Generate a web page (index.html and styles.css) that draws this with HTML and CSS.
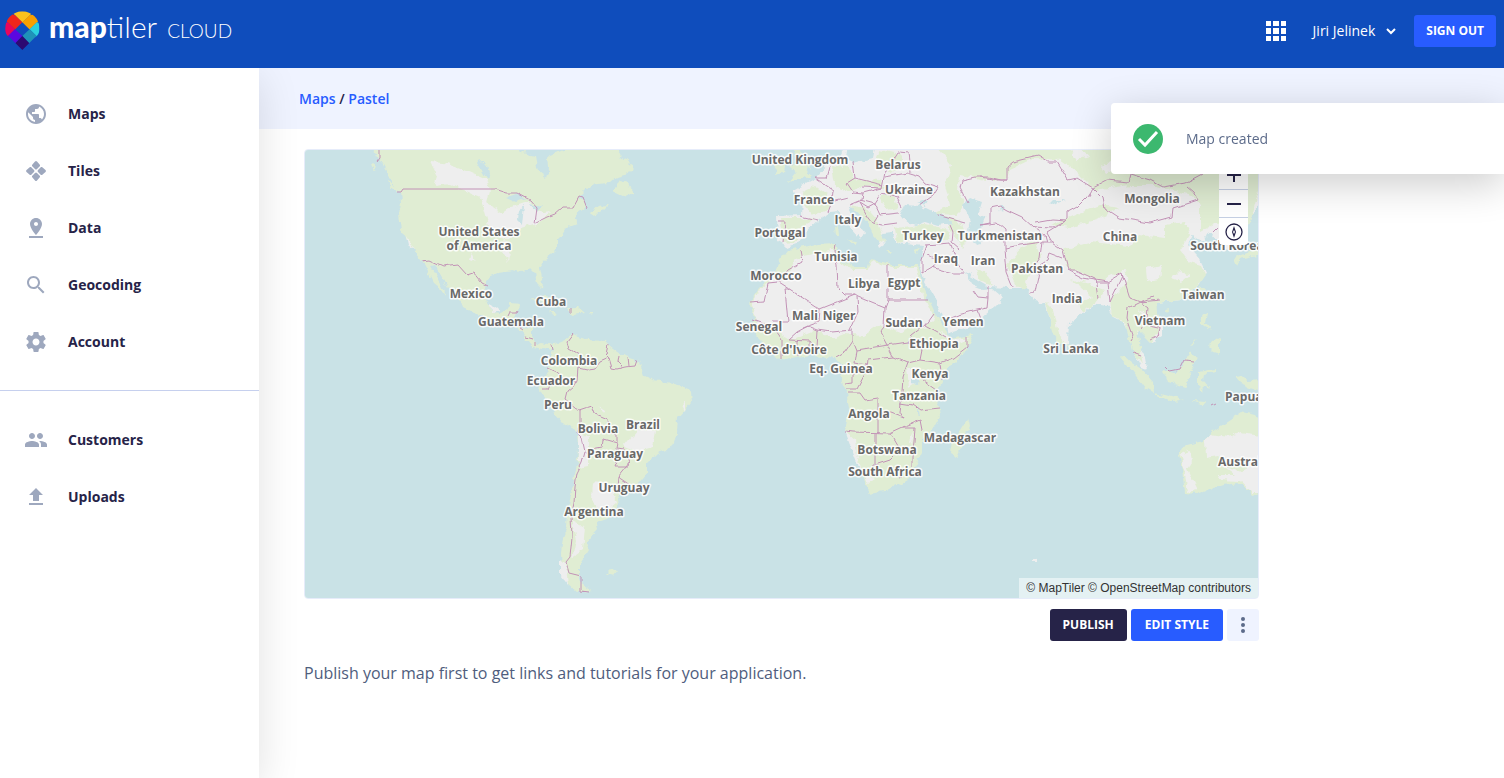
FILE: index.html
```html
<!DOCTYPE html>
<html lang="en">
<head>
<meta charset="utf-8">
<meta name="viewport" content="width=device-width, initial-scale=1">
<title>Pastel – MapTiler Cloud</title>
<link rel="stylesheet" href="styles.css">
</head>
<body>
<header class="topbar">
  <a class="brand" href="#" aria-label="MapTiler Cloud">
    <svg class="brand-mark" viewBox="15 32 105 118" aria-hidden="true">
      <clipPath id="pin"><path d="M15 85A52 52 0 0 1 119 85C119 100 113 107 104 113L67 150 30 113C21 107 15 100 15 85z"/></clipPath>
      <g clip-path="url(#pin)">
        <path fill="#fbc21d" d="M67 20 98 36 90 45 67 67 45 45 36 36z"/>
        <path fill="#f9a000" d="M89 45 112 40 119 60 111 67 89 88 67 66z"/>
        <path fill="#f1261c" d="M45 45 67 66 45 88 23 67 15 60 22 36z"/>
        <path fill="#e8065c" d="M23 66 45 87 23 109 5 100 5 70z"/>
        <path fill="#2bd0de" d="M111 66 130 70 130 100 111 109 89 87z"/>
        <path fill="#5b07e0" d="M45 87 67 108 45 130 22 109z"/>
        <path fill="#1f93b8" d="M89 87 112 109 89 130 67 108z"/>
        <path fill="#2c0a72" d="M67 108 89 130 67 152 45 130z"/>
      </g>
    </svg>
    <span class="brand-name"><b>map</b>tiler</span>
    <span class="brand-suffix">CLOUD</span>
  </a>
  <div class="topbar-actions">
    <button class="icon-button" type="button" aria-label="Apps">
      <svg width="20" height="20" viewBox="0 0 20 20" fill="#fff"><path d="M0 0h5v5H0zM7 0h6v5H7zM15 0h5v5h-5zM0 7h5v6H0zM7 7h6v6H7zM15 7h5v6h-5zM0 15h5v5H0zM7 15h6v5H7zM15 15h5v5h-5z"/></svg>
    </button>
    <button class="user-button" type="button">Jiri Jelinek
      <svg width="10" height="7" viewBox="0 0 10 7" fill="none" stroke="#fff" stroke-width="2"><path d="M1 1l4 4 4-4"/></svg>
    </button>
    <button class="btn btn-primary" type="button">SIGN OUT</button>
  </div>
</header>

<div class="shell">
  <nav class="sidebar" aria-label="Main">
    <ul class="nav-list">
      <li><a class="nav-link" href="#"><svg viewBox="0 0 24 24"><path d="M12 2C6.480 2 2 6.480 2 12s4.480 10 10 10 10-4.480 10-10S17.520 2 12 2zm-1 17.930c-3.950-.49-7-3.850-7-7.930 0-.62.08-1.210.21-1.790L9 15v1c0 1.100.9 2 2 2v1.930zm6.900-2.540c-.26-.81-1-1.390-1.900-1.390h-1v-3c0-.55-.45-1-1-1H8v-2h2c.55 0 1-.45 1-1V7h2c1.100 0 2-.9 2-2v-.41c2.930 1.190 5 4.060 5 7.410 0 2.080-.8 3.970-2.100 5.390z"/></svg>Maps</a></li>
      <li><a class="nav-link" href="#"><svg viewBox="0 0 24 24"><path d="M11 2.500q1-1 2 0L16 6v1l-3 3q-1 1-2 0L8 7V6zM11 14q1-1 2 0l3 3v1l-3 3.500q-1 1-2 0L8 18v-1zM6 8h1l3 3q1 1 0 2l-3 3H6l-3.500-3q-1-1 0-2zM17 8h1l3.500 3q1 1 0 2L18 16h-1l-3-3q-1-1 0-2z"/></svg>Tiles</a></li>
      <li><a class="nav-link" href="#"><svg viewBox="0 0 24 24"><path d="M18 8c0-3.310-2.690-6-6-6S6 4.690 6 8c0 4.500 6 11 6 11s6-6.500 6-11zm-8 0c0-1.100.9-2 2-2s2 .9 2 2-.89 2-2 2c-1.100 0-2-.9-2-2zM5 20v2h14v-2H5z"/></svg>Data</a></li>
      <li><a class="nav-link" href="#"><svg viewBox="0 0 24 24"><path d="M15.500 14h-.79l-.28-.27C15.410 12.590 16 11.110 16 9.500 16 5.910 13.090 3 9.500 3S3 5.910 3 9.500 5.910 16 9.500 16c1.610 0 3.090-.59 4.230-1.570l.27.28v.79l5 4.990L20.490 19l-4.990-5zm-6 0C7.010 14 5 11.990 5 9.500S7.010 5 9.500 5 14 7.010 14 9.500 11.990 14 9.500 14z"/></svg>Geocoding</a></li>
      <li><a class="nav-link" href="#"><svg viewBox="0 0 24 24"><path d="M19.430 12.980c.04-.32.07-.64.07-.98s-.03-.66-.07-.98l2.110-1.650c.19-.15.24-.42.12-.64l-2-3.460c-.12-.22-.39-.3-.61-.22l-2.490 1c-.52-.4-1.080-.73-1.690-.98l-.38-2.650C14.460 2.180 14.250 2 14 2h-4c-.25 0-.46.18-.49.42l-.38 2.650c-.61.25-1.170.59-1.690.98l-2.490-1c-.23-.09-.49 0-.61.22l-2 3.460c-.13.22-.07.49.12.64l2.110 1.650c-.04.32-.07.65-.07.98s.03.66.07.98l-2.110 1.650c-.19.15-.24.42-.12.64l2 3.460c.12.22.39.3.61.22l2.490-1c.52.4 1.080.73 1.690.98l.38 2.650c.03.24.24.42.49.42h4c.25 0 .46-.18.49-.42l.38-2.650c.61-.25 1.170-.59 1.690-.98l2.490 1c.23.09.49 0 .61-.22l2-3.460c.12-.22.07-.49-.12-.64l-2.110-1.650zM12 15.500c-1.930 0-3.500-1.570-3.500-3.500s1.570-3.500 3.500-3.500 3.500 1.570 3.500 3.500-1.570 3.500-3.500 3.500z"/></svg>Account</a></li>
    </ul>
    <ul class="nav-list nav-list-secondary">
      <li><a class="nav-link" href="#"><svg viewBox="0 0 24 24"><path d="M16 11c1.660 0 2.990-1.340 2.990-3S17.660 5 16 5s-3 1.340-3 3 1.340 3 3 3zm-8 0c1.660 0 2.990-1.340 2.990-3S9.660 5 8 5 5 6.340 5 8s1.340 3 3 3zm0 2c-2.330 0-7 1.170-7 3.500V19h14v-2.500c0-2.330-4.670-3.500-7-3.500zm8 0c-.29 0-.62.02-.97.05 1.160.84 1.970 1.970 1.970 3.450V19h6v-2.500c0-2.330-4.670-3.500-7-3.500z"/></svg>Customers</a></li>
      <li><a class="nav-link" href="#"><svg viewBox="0 0 24 24"><path d="M9 16h6v-6h4l-7-7-7 7h4zm-4 2h14v2H5z"/></svg>Uploads</a></li>
    </ul>
  </nav>

  <main class="main">
    <div class="crumbs"><a href="#">Maps</a> / <a href="#">Pastel</a></div>
    <div class="content">
      <div class="map">
        <svg class="map-canvas" viewBox="305 150 953 448" preserveAspectRatio="xMidYMid slice" role="img" aria-label="World map, Pastel style">
          <defs>
            <filter id="coast" filterUnits="userSpaceOnUse" x="290" y="135" width="985" height="480" color-interpolation-filters="sRGB">
              <feTurbulence type="fractalNoise" baseFrequency=".13" numOctaves="3" seed="4" result="n"/>
              <feDisplacementMap in="SourceGraphic" in2="n" scale="7" xChannelSelector="R" yChannelSelector="G"/>
            </filter>
            <filter id="wander" filterUnits="userSpaceOnUse" x="290" y="135" width="985" height="480" color-interpolation-filters="sRGB">
              <feTurbulence type="fractalNoise" baseFrequency=".08" numOctaves="2" seed="8" result="n"/>
              <feDisplacementMap in="SourceGraphic" in2="n" scale="5" xChannelSelector="R" yChannelSelector="G"/>
            </filter>
          </defs>
          <rect class="water" x="305" y="150" width="953" height="448"/>
          <g filter="url(#coast)">
            <!-- Americas -->
            <path class="green" d="M370 138 374 150 379 159 386 171 392 182 400 192 401 202 399 215 401 230 408 242 415 252 422 260 428 272 433 282 440 288 447 297 441 283 435 273 430 266 434 265 440 273 448 287 460 300 463 308 473 313 490 318 507 323 522 332 527 340 533 347 543 349 550 351 553 345 543 343 537 345 532 337 532 328 520 327 514 318 520 303 512 302 507 310 500 314 493 313 487 303 485 287 488 277 500 272 513 270 520 272 530 268 535 273 537 283 542 288 543 282 540 267 545 260 557 250 557 240 562 235 567 227 577 223 575 216 586 208 584 200 578 197 587 188 597 184 610 183 617 177 632 173 633 165 622 157 610 138z"/>
            <path class="green" d="M590 212 598 206 608 205 600 213 592 215zM612 192 620 180 628 182 634 194 625 198zM387 181 400 189 397 192 388 185zM371 163 375 164 374 170z"/>
            <path class="green" d="M553 345 550 367 543 380 540 390 547 400 555 415 562 423 577 432 578 450 576 470 572 490 568 510 567 527 563 537 561 553 562 570 567 583 577 592 593 591 583 585 580 577 580 563 588 550 586 543 597 530 595 522 610 517 618 507 617 497 625 494 633 490 647 473 647 463 657 453 672 448 677 433 678 418 692 402 691 392 673 383 653 380 643 375 637 360 623 356 610 347 607 341 587 340 572 335 565 340 558 343z"/>
            <path class="green" d="M530 300 541 296 553 299 567 305 555 307 541 302zM568 308 577 307 584 313 572 315zM550 312 556 312 555 316zM588 311 593 311 592 315zM606 574 610 570 617 571 613 576z"/>
            <path class="bare" d="M430 162 443 163 466 171 487 180 490 190 487 203 503 213 512 207 525 203 530 201 538 213 551 211 540 222 521 228 505 240 490 233 485 215 480 197 450 184 434 186 437 176zM506 240 511 250 508 262 503 254zM472 253 476 262 470 260zM406 236 414 250 408 245zM485 290 489 303 500 311 492 313z"/>
            <path class="bare" d="M578 430 588 437 588 466 578 468 578 450zM637 430 655 431 652 448 640 452 624 446zM593 483 610 486 616 503 604 513 592 500zM571 520 585 527 583 550 572 558 576 540zM560 560 566 566 568 585 560 575zM599 406 605 410 603 413zM682 405 686 402 685 411z"/>
            <path class="water" d="M516 140 520 152 535 156 538 172 546 178 549 168 548 157 563 150 566 140zM477 162 484 161 490 178 488 181zM506 198 517 194 527 198 515 202zM519 210 524 206 522 224 518 220zM530 204 542 207 537 213z"/>
            <!-- Africa -->
            <path class="green" d="M788 250 780 260 775 272 760 288 750 303 754 318 750 327 755 335 767 347 780 360 797 357 813 355 823 356 835 359 843 365 841 377 847 392 850 407 845 430 852 443 857 460 862 475 867 487 870 494 890 490 907 480 915 467 922 453 922 440 933 430 940 417 938 400 937 390 947 370 967 350 973 335 950 339 947 332 937 318 925 292 919 273 917 265 893 265 883 262 870 260 868 267 853 267 840 260 838 252 835 243 817 244 800 248z"/>
            <path class="bare" d="M797 256 815 249 833 250 840 262 853 269 868 269 872 262 892 267 915 267 922 292 934 318 925 327 915 322 901 333 880 325 862 336 845 334 835 338 815 330 790 341 770 327 756 322 752 303 762 288 775 277 790 272zM937 330 955 340 970 338 955 345zM845 432 855 440 862 473 874 480 868 484 857 463zM910 440 914 430 912 445zM907 367 917 367 915 383 909 387z"/>
            <path class="green" d="M968 417 970 427 957 457 950 453 952 440 960 430z"/>
            <!-- Eurasia -->
            <path class="bare" d="M877 138 873 158 853 163 840 158 830 163 817 177 802 185 793 190 803 200 802 215 777 216 778 242 787 247 800 242 810 227 818 220 830 213 840 212 850 228 860 239 865 232 853 217 848 207 857 208 872 227 880 248 884 245 882 233 893 232 897 243 913 245 924 246 921 260 919 270 922 276 933 295 947 327 950 333 973 325 997 305 1003 298 992 288 983 289 973 285 965 272 973 277 990 287 1008 288 1025 288 1035 300 1045 305 1050 322 1055 335 1060 343 1068 342 1069 323 1083 313 1098 303 1108 305 1113 317 1123 322 1130 335 1133 350 1143 370 1147 369 1145 358 1138 348 1135 335 1140 330 1150 343 1163 335 1163 323 1153 308 1157 303 1180 300 1197 288 1205 272 1197 255 1188 245 1193 235 1203 242 1210 232 1220 246 1232 252 1235 235 1247 222 1262 200 1275 138z"/>
            <path class="bare" d="M838 140 842 152 838 160 846 160 848 140z"/>
            <path class="green" d="M792 140 795 155 800 160 791 168 797 172 789 182 810 177 806 165 812 170 800 152 806 140zM776 163 786 160 784 172 775 175z"/>
            <path class="green" d="M834 227 838 226 839 235 835 236zM848 239 857 240 856 244zM885 251 893 251 890 254zM913 251 920 249 916 254zM1067 343 1073 347 1070 354z"/>
            <!-- Greener parts of Europe and Asia -->
            <path class="green" d="M780 218 800 218 815 220 796 230 797 242 782 243 782 230zM802 192 815 186 828 195 830 208 812 215 804 205zM832 165 850 168 853 178 880 180 885 188 862 186 850 192 835 185zM850 205 865 208 877 222 884 240 878 243 868 222zM880 196 893 195 898 208 887 210zM896 228 925 224 950 230 947 240 915 240 898 243zM880 150 900 154 905 165 890 172 876 160zM800 248 820 246 835 246 828 252 803 256 788 266 782 262 790 252z"/>
            <path class="green" d="M938 148 1020 140 1090 140 1100 170 1085 178 1060 160 1035 158 1010 170 1006 180 985 180 960 175 958 190 965 205 955 215 940 214 960 222 967 240 962 247 948 225 935 213 950 205 945 185 952 165zM975 270 980 280 993 286 985 273z"/>
            <path class="green" d="M1075 215 1100 205 1120 208 1100 218 1070 228 1050 225zM1065 140 1240 140 1270 150 1250 222 1235 232 1225 236 1218 222 1200 232 1200 205 1190 195 1155 185 1130 185 1095 190 1080 175z"/>
            <path class="green" d="M1062 250 1090 242 1130 246 1140 235 1165 238 1165 225 1185 222 1190 235 1180 250 1190 262 1200 265 1205 275 1195 289 1180 300 1157 303 1160 330 1150 343 1137 330 1143 365 1132 350 1125 322 1112 316 1110 300 1130 280 1125 270 1100 280 1070 270zM1022 248 1035 240 1040 258 1030 275 1025 290 1015 285 1007 265zM1045 302 1053 310 1058 335 1066 342 1061 344 1053 335zM1070 278 1095 286 1105 290 1095 303 1083 312 1078 305 1093 297z"/>
            <path class="bare" d="M1146 268 1162 265 1160 280 1147 282zM1180 270 1190 275 1182 282 1172 278zM1150 155 1170 150 1180 160 1160 162zM1140 310 1150 320 1143 328zM1070 150 1082 146 1088 156 1076 160zM1100 166 1112 160 1116 170 1106 174z"/>
            <path class="water" d="M905 221 900 214 905 205 920 206 930 211 946 217 952 224 938 226 925 222 915 225zM917 203 928 199 925 206zM963 205 970 198 982 202 978 215 985 218 980 230 986 241 977 244 968 230 970 220zM1000 205 1005 207 1001 212zM1047 206 1053 200 1065 200 1055 203zM911 378 918 378 917 384 911 383zM918 406 920 418 918 416z"/>
            <!-- South-east Asia, Oceania, Japan -->
            <path class="green" d="M1120 357 1127 358 1142 370 1153 382 1154 393 1145 388 1133 372zM1153 393 1166 395 1184 400 1170 401zM1164 370 1176 372 1184 362 1190 353 1197 357 1192 370 1185 387 1168 382zM1198 372 1216 369 1216 372 1204 375 1203 380 1210 388 1203 385 1202 392 1198 385zM1203 312 1208 313 1206 323 1213 331 1205 327 1200 322zM1208 346 1220 337 1220 353 1213 351zM1190 346 1197 339 1194 345zM1235 377 1243 376 1246 381 1262 380 1262 391 1250 387 1240 383zM1190 401 1206 402 1204 405zM1165 309 1170 308 1167 312zM1200 287 1205 289 1201 296zM1234 258 1250 252 1262 248 1262 254 1240 259 1237 265z"/>
            <path class="green" d="M1262 418 1255 415 1242 412 1230 420 1210 433 1203 442 1183 447 1179 455 1182 470 1185 493 1197 494 1213 487 1237 483 1248 489 1252 495 1262 492z"/>
            <path class="bare" d="M1205 440 1210 434 1228 437 1240 433 1262 436 1262 492 1252 492 1240 481 1217 480 1218 475 1235 475 1222 465 1218 455 1206 457zM1180 455 1190 450 1192 462 1187 470 1197 490 1188 492 1185 475z"/>
            <path class="green" d="M1226 460 1240 458 1250 464 1243 472 1228 468z"/>
            <path class="bare" d="M1032 558 1037 559 1037 562 1032 562z"/>
          </g>
          <path class="border" d="M397 192 401 192 403 189H495"/>
          <g class="border" filter="url(#wander)">
            <path d="M380 150V158L377 162M495 189 507 193 517 193 530 200 537 208 535 223 547 217 555 214 562 208 573 208 579 197 583 198 587 208M422 261 429 260 442 266 458 264 467 274 473 272 482 283 488 286M507 317 509 313 517 313 518 311M517 325 524 330M525 337 532 339M535 342V346M552 345 553 350M571 308V314"/>
            <path d="M573 334 567 342 569 349 578 354 585 360 592 362M608 346 606 355 609 358 600 362 595 369 587 370 578 368 577 380 573 387 567 392 565 400 575 408 580 410 592 406 595 414 607 419 608 430 617 435 617 443 603 439 602 447 592 449M609 358 612 368 617 369 625 367 635 366 637 360M618 356 617 362 622 367M628 357 629 366M548 369 557 373 565 380 576 382M542 390 548 390 550 385M580 410V423L577 433 582 438 585 452 582 463 577 473 575 487 574 503 571 517 572 537 570 557 566 562 569 573 581 576V591L589 592M617 443 616 448 624 449 630 462 628 467 615 467 617 462M630 462 618 477 617 487M618 477 630 485"/>
            <path d="M800 251 802 262 788 270 778 282 768 283 764 302 750 303M778 282 820 309 855 295 845 295 838 288 837 265 834 252 835 243M791 289H785L788 322 773 322M855 295 858 297 885 308 888 300H927M888 264V300M885 308 884 327 880 332M857 297 858 312 850 330M820 309 819 322 803 328M753 320 773 327 779 335 782 340V360M788 340 797 332 808 326 818 330 832 332 853 330M788 340 809 341 817 346 818 330M797 341V357M809 341V355M817 346V355M835 358 845 352 853 340V330M853 340 857 350 855 363 867 365 853 375V382L845 383M846 389H857L867 370 868 360 893 357 887 345 875 347 857 350M887 345 880 332M887 345 907 342 912 335 925 325 933 314M925 325 947 337M893 357 908 363 920 360 922 350 907 342M920 360 940 363 953 358 967 347V337M940 363 942 380M908 363 903 377 902 392 900 413 903 418M919 377 937 390M847 393H860L865 400 878 398V413L890 413 903 418M878 413V433M845 431 853 432 890 433 903 427 920 420 922 430M900 403 913 405 920 410 940 408M875 433V465L890 460 900 450 890 433M874 465V477M915 427 914 443 912 457V467M903 427 915 427M898 478 902 476"/>
            <path d="M927 245 922 260V273L932 267 953 273 965 273M932 267 940 260 927 255M925 245 950 243 957 262 965 273M937 215 950 219 965 223M950 225 953 232 952 243 960 250M973 290 978 297 988 298M988 287V298L987 308 977 310 958 315 950 318M977 310 980 318M885 177 907 173 920 177 925 183 938 187 933 195 920 204M898 152 885 172 882 188M898 152 908 153 910 173M853 162 855 178 847 183M855 178 867 181 883 185M847 183 853 192 848 197 835 200M853 192 863 193 862 200 850 205M862 187 882 188M863 193 882 188M860 200 875 204 882 193 897 197 902 207M875 204 880 215 898 213M875 204 868 208 860 203 868 217 873 223 878 215M873 223 882 225 897 223M830 167 827 178 815 178 833 190 832 202 838 200M832 202 828 212M800 216 817 220M778 222 785 222 783 242M967 202 960 188 962 180 975 177 987 177 1000 180 1007 180"/>
            <path d="M980 177 997 180 1007 180V167L1013 162 1038 156 1048 162 1057 162 1068 180 1077 178 1093 188 1087 197 1077 207 1068 212V220L1052 228 1033 227 1022 217 1007 210 1000 206 990 208V223L980 225M1093 188 1108 180 1128 182 1130 174 1150 180 1163 187 1185 183 1202 174M1093 188 1103 198 1105 208 1120 218 1150 223 1172 217 1173 208 1198 200 1193 192 1187 187M1068 220 1047 233 1052 242 1063 250 1068 270 1083 278 1107 282 1122 273 1130 298 1140 302 1160 300M1068 270 1075 270 1095 279 1098 298M1095 283H1108L1110 302 1123 275M1063 258 1050 253 1048 260 1040 265 1038 278 1035 292 1030 293M1005 248 1007 272 1013 287M1005 248 1020 245 1042 242 1052 242M1042 242 1040 258 1035 265M980 225 997 223 1005 230V248M1033 227 1045 235 1047 242M1035 222 1052 219 1068 220M1140 302 1128 308 1127 318 1133 335 1130 340M1140 302 1148 308 1147 318 1160 328 1158 336 1150 340M1140 302 1153 297M1142 330 1145 325 1158 328M1134 352 1142 355M1165 367 1170 372 1180 370 1185 360 1193 361M1212 405 1216 403M1213 233 1219 227"/>
          </g>
          <g class="labels">
            <text x="479" y="236">United States</text><text x="479" y="250">of America</text>
            <text x="471" y="298">Mexico</text><text x="551" y="306">Cuba</text><text x="511" y="326">Guatemala</text>
            <text x="569" y="365">Colombia</text><text x="551" y="385">Ecuador</text><text x="558" y="409">Peru</text>
            <text x="598" y="433">Bolivia</text><text x="643" y="429">Brazil</text><text x="615" y="458">Paraguay</text>
            <text x="624" y="492">Uruguay</text><text x="594" y="516">Argentina</text>
            <text x="800" y="164">United Kingdom</text><text x="898" y="169">Belarus</text><text x="909" y="194">Ukraine</text>
            <text x="814" y="204">France</text><text x="848" y="224">Italy</text><text x="780" y="237">Portugal</text>
            <text x="923" y="240">Turkey</text><text x="1000" y="240">Turkmenistan</text><text x="1025" y="196">Kazakhstan</text>
            <text x="1152" y="203">Mongolia</text><text x="1120" y="241">China</text><text x="1227" y="250">South Korea</text>
            <text x="836" y="261">Tunisia</text><text x="946" y="263">Iraq</text><text x="983" y="265">Iran</text>
            <text x="1037" y="273">Pakistan</text><text x="776" y="280">Morocco</text><text x="864" y="288">Libya</text>
            <text x="904" y="287">Egypt</text><text x="1067" y="303">India</text><text x="1203" y="299">Taiwan</text>
            <text x="805" y="320">Mali</text><text x="839" y="320">Niger</text><text x="759" y="331">Senegal</text>
            <text x="904" y="327">Sudan</text><text x="963" y="326">Yemen</text><text x="1160" y="325">Vietnam</text>
            <text x="934" y="348">Ethiopia</text><text x="789" y="354">Côte d'Ivoire</text><text x="1071" y="353">Sri Lanka</text>
            <text x="841" y="373">Eq. Guinea</text><text x="930" y="378">Kenya</text><text x="919" y="400">Tanzania</text>
            <text x="869" y="418">Angola</text><text x="960" y="442">Madagascar</text><text x="887" y="454">Botswana</text>
            <text x="885" y="476">South Africa</text>
            <text class="from-left" x="1225" y="401">Papua</text><text class="from-left" x="1218" y="466">Australia</text>
          </g>
        </svg>
        <div class="map-controls">
          <button type="button" aria-label="Zoom in"><svg width="14" height="14" viewBox="0 0 14 14"><path d="M0 6h6V0h2v6h6v2H8v6H6V8H0z"/></svg></button>
          <button type="button" aria-label="Zoom out"><svg width="14" height="14" viewBox="0 0 14 14"><path d="M0 6h14v2H0z"/></svg></button>
          <button type="button" aria-label="Reset bearing to north"><svg width="18" height="18" viewBox="0 0 18 18"><circle cx="9" cy="9" r="8" fill="none" stroke="#262348" stroke-width="1.300"/><path d="M9 3 11 9 9 15 7 9z"/><path fill="#fff" d="M9 7 10 9 9 11 8 9z"/></svg></button>
        </div>
        <div class="attribution"><a href="#">© MapTiler</a> <a href="#">© OpenStreetMap contributors</a></div>
      </div>
      <div class="map-actions">
        <button class="btn btn-dark" type="button">PUBLISH</button>
        <button class="btn btn-primary" type="button">EDIT STYLE</button>
        <button class="btn btn-more" type="button" aria-label="More actions"><svg width="4" height="16" viewBox="0 0 4 16"><circle cx="2" cy="2" r="2"/><circle cx="2" cy="8" r="2"/><circle cx="2" cy="14" r="2"/></svg></button>
      </div>
      <p class="hint">Publish your map first to get links and tutorials for your application.</p>
    </div>
  </main>
</div>

<div class="toast" role="status">
  <svg width="30" height="30" viewBox="0 0 30 30" aria-hidden="true"><circle cx="15" cy="15" r="15" fill="#3cb86f"/><path d="M6 15l6 6L24 8" fill="none" stroke="#fff" stroke-width="3"/></svg>
  Map created
</div>
</body>
</html>
```
FILE: styles.css
```css
* { box-sizing: border-box; }

body {
  margin: 0;
  min-height: 100vh;
  display: flex;
  flex-direction: column;
  background: #fff;
  color: #262348;
  font-family: "Open Sans", "Noto Sans", sans-serif;
  font-size: 14px;
  line-height: 20px;
}

a { color: inherit; text-decoration: none; }
button { font: inherit; border: 0; cursor: pointer; }

/* Top bar */
.topbar {
  display: flex;
  justify-content: space-between;
  height: 68px;
  padding: 11px 8px 0 5px;
  background: #0f4dbc;
  color: #fff;
}
.brand {
  display: flex;
  align-items: flex-start;
  height: 39px;
}
.brand-mark { width: 35px; height: 39px; }
.brand-name {
  margin-left: 9px;
  font-family: Lato, sans-serif;
  font-size: 30px;
  font-weight: 300;
  line-height: 30px;
}
.brand-name b { font-weight: 900; }
.brand-suffix {
  margin-left: 10px;
  font-family: Lato, sans-serif;
  font-size: 19px;
  font-weight: 300;
  line-height: 40px;
}
.topbar-actions {
  display: flex;
  align-items: center;
  height: 40px;
}
.topbar .btn { padding: 0 12px; }
.icon-button,
.user-button {
  display: flex;
  align-items: center;
  padding: 0;
  background: none;
  color: #fff;
}
.user-button { gap: 11px; margin: 0 18px 0 27px; font-weight: 500; }

/* Buttons */
.btn {
  height: 32px;
  padding: 0 14px;
  border-radius: 3px;
  color: #fff;
  font-size: 12px;
  font-weight: 700;
}
.btn-primary { background: #285cff; }
.btn-dark { padding: 0 13px; background: #262348; }
.btn-more {
  display: flex;
  align-items: center;
  background: #eff3ff;
  fill: #5c6b8a;
}

/* Page frame */
.shell { display: flex; flex: 1; }
.sidebar {
  position: relative;
  flex: 0 0 259px;
  padding-top: 17px;
  background: #fff;
  box-shadow: 0 10px 40px rgba(0, 0, 0, .12);
  clip-path: inset(0 -60px 0 0);
}
.nav-list { margin: 0; padding: 0; list-style: none; }
.nav-list-secondary {
  margin-top: 20px;
  padding-top: 20px;
  border-top: 1px solid #c6d0ee;
}
.nav-link {
  display: flex;
  align-items: center;
  gap: 20px;
  height: 57px;
  padding-left: 24px;
  font-size: 14px;
  font-weight: 700;
}
.nav-link svg { width: 24px; height: 24px; fill: #9ea8be; }

.main { flex: 1; min-width: 0; }
.crumbs {
  height: 61px;
  padding: 21px 40px;
  background: #eff3ff;
  font-weight: 600;
}
.crumbs a { color: #285cff; }
.content {
  max-width: 1045px;
  padding: 20px 45px;
}

/* Map */
.map {
  position: relative;
  height: 450px;
  border: 1px solid #e6ecfa;
  border-radius: 4px;
  overflow: hidden;
}
.map-canvas { display: block; width: 100%; height: 100%; }
.water { fill: #c9e2e6; }
.green { fill: #e0edd3; }
.bare { fill: #eee; }
.border { fill: none; stroke: #c292b6; stroke-width: 1; }
.labels {
  font-size: 12px;
  font-weight: 700;
  text-anchor: middle;
  fill: #696969;
  stroke: rgba(255, 255, 255, .85);
  stroke-width: 3;
  stroke-linejoin: round;
  paint-order: stroke;
}
.labels .from-left { text-anchor: start; }
.map-controls {
  position: absolute;
  top: 11px;
  right: 10px;
  width: 29px;
  border-radius: 4px;
  background: #fff;
  overflow: hidden;
}
.map-controls button {
  display: flex;
  align-items: center;
  justify-content: center;
  width: 100%;
  height: 28px;
  padding: 0;
  background: none;
  fill: #262348;
}
.map-controls button + button { border-top: 1px solid #c6d0e4; }
.attribution {
  position: absolute;
  right: 0;
  bottom: 0;
  padding: 0 7px;
  background: rgba(255, 255, 255, .5);
  color: #333;
  font: 12px/20px "Liberation Sans", Arial, sans-serif;
}
.map-actions {
  display: flex;
  justify-content: flex-end;
  gap: 4px;
  margin-top: 10px;
}
.hint {
  margin: 20px 0 0;
  color: #4f5d7d;
  font-size: 16px;
  line-height: 24px;
}

/* Notification */
.toast {
  position: fixed;
  top: 103px;
  right: 0;
  display: flex;
  align-items: center;
  gap: 23px;
  width: 393px;
  height: 71px;
  padding: 0 22px;
  border-radius: 4px 0 0 4px;
  background: #fff;
  color: #5c6b8a;
  box-shadow: 0 10px 40px rgba(0, 0, 0, .2);
}
```
